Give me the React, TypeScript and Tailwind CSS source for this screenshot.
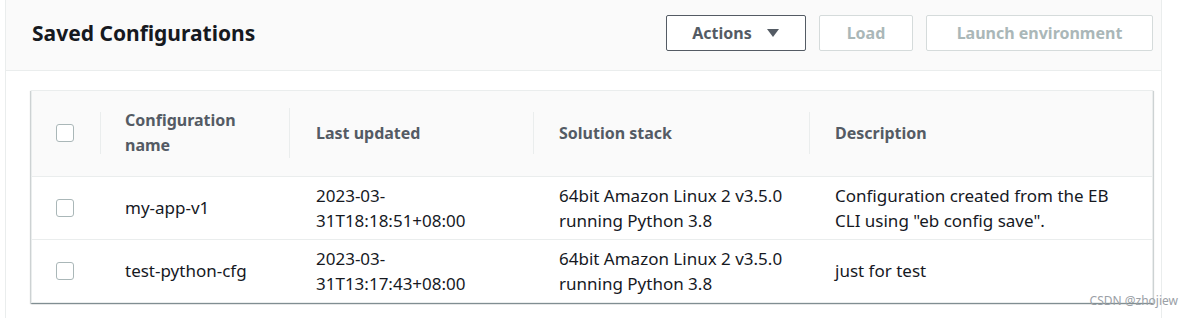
const rows = [
  {
    name: "my-app-v1",
    updated: ["2023-03-", "31T18:18:51+08:00"],
    stack: ["64bit Amazon Linux 2 v3.5.0", "running Python 3.8"],
    description: 'Configuration created from the EB CLI using "eb config save".',
  },
  {
    name: "test-python-cfg",
    updated: ["2023-03-", "31T13:17:43+08:00"],
    stack: ["64bit Amazon Linux 2 v3.5.0", "running Python 3.8"],
    description: "just for test",
  },
];

function Checkbox() {
  return <span className="block h-[18px] w-[18px] rounded-[3px] border border-[#aab7b8] bg-white" />;
}

export default function App() {
  return (
    <div
      className="h-[318px] w-[1181px] bg-white text-[16px] leading-[25px] text-[#16191f]"
      style={{ fontFamily: '"Noto Sans", "Open Sans", sans-serif' }}
    >
      <section className="ml-[5px] w-[1157px] border-x border-[#eaeded] bg-white pb-[17px]">
        <header className="flex h-[71px] items-center justify-between border-b border-[#eaeded] bg-[#fafafa] pb-[4px] pl-[26px] pr-[8px]">
          <h2 className="text-[21px] font-bold text-[#16191f]">Saved Configurations</h2>
          <div className="flex items-center gap-[13px]">
            <button className="flex h-[36px] w-[140px] items-center justify-center gap-[14px] rounded-[2px] border border-[#545b64] bg-white text-[16px] font-bold text-[#545b64]">
              Actions
              <svg width="14" height="10" viewBox="0 0 14 10">
                <path d="M1 1 L13 1 L7 9 Z" fill="#545b64" />
              </svg>
            </button>
            <button className="h-[36px] w-[94px] rounded-[2px] border border-[#d5dbdb] bg-white text-[16px] font-bold text-[#aab7b8]">
              Load
            </button>
            <button className="h-[36px] w-[227px] rounded-[2px] border border-[#d5dbdb] bg-white text-[16px] font-bold text-[#aab7b8]">
              Launch environment
            </button>
          </div>
        </header>

        <div className="ml-[25px] mt-[19px] w-[1122px] border border-[#eaeded] bg-white shadow-[0_1px_1px_0_rgba(0,28,36,0.3),1px_1px_1px_0_rgba(0,28,36,0.15),-1px_1px_1px_0_rgba(0,28,36,0.15)]">
          <table className="w-full table-fixed border-collapse">
            <colgroup>
              <col className="w-[69px]" />
              <col className="w-[189px]" />
              <col className="w-[244px]" />
              <col className="w-[276px]" />
              <col />
            </colgroup>
            <thead>
              <tr className="h-[85px] bg-[#fafafa] text-[#545b64]">
                <th className="p-0 align-middle">
                  <div className="flex h-[42px] items-center border-r border-[#eaeded] pl-[24px]">
                    <Checkbox />
                  </div>
                </th>
                <th className="p-0 text-left font-bold">
                  <div className="flex min-h-[42px] items-center border-r border-[#eaeded] pl-[24px] pr-4">
                    Configuration name
                  </div>
                </th>
                <th className="p-0 text-left font-bold">
                  <div className="flex min-h-[42px] items-center border-r border-[#eaeded] pl-[26px] pr-4">
                    Last updated
                  </div>
                </th>
                <th className="p-0 text-left font-bold">
                  <div className="flex min-h-[42px] items-center border-r border-[#eaeded] pl-[25px] pr-4">
                    Solution stack
                  </div>
                </th>
                <th className="p-0 text-left font-bold">
                  <div className="flex min-h-[42px] items-center pl-[25px] pr-4">Description</div>
                </th>
              </tr>
            </thead>
            <tbody className="text-[17px]">
              {rows.map((row, i) => (
                <tr key={row.name} className={"border-t border-[#eaeded] " + (i === 0 ? "h-[62px]" : "h-[61px]")}>
                  <td className="p-0 pl-[24px] align-middle">
                    <Checkbox />
                  </td>
                  <td className="py-[6px] pl-[24px] pr-4 align-middle">{row.name}</td>
                  <td className="py-[6px] pl-[26px] pr-2 align-middle">
                    {row.updated[0]}
                    <br />
                    {row.updated[1]}
                  </td>
                  <td className="py-[6px] pl-[25px] pr-2 align-middle">
                    {row.stack[0]}
                    <br />
                    {row.stack[1]}
                  </td>
                  <td className="py-[6px] pl-[25px] pr-[30px] align-middle">{row.description}</td>
                </tr>
              ))}
            </tbody>
          </table>
        </div>
      </section>
      <div className="relative">
        <span className="absolute right-[3px] top-[-25px] text-[12px] leading-none text-[#9aa0a6]">
          CSDN @zhojiew
        </span>
      </div>
    </div>
  );
}
